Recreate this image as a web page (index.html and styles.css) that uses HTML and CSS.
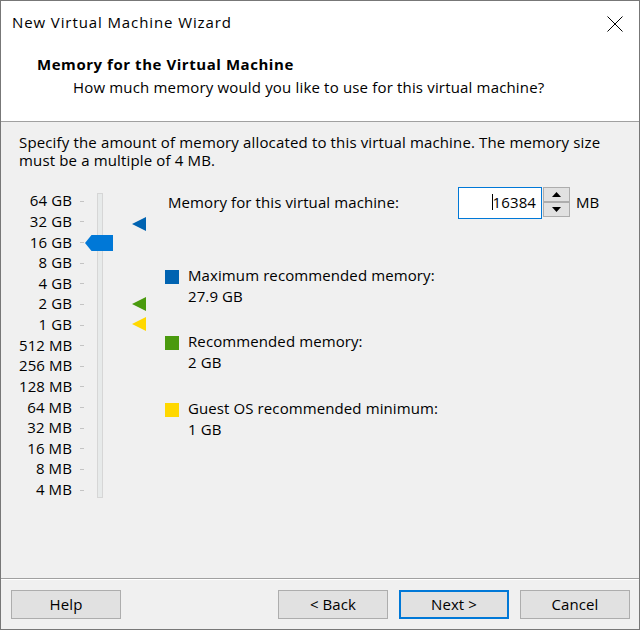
FILE: index.html
```html
<!DOCTYPE html>
<html>
<head>
<meta charset="utf-8">
<title>New Virtual Machine Wizard</title>
<link rel="stylesheet" href="styles.css">
</head>
<body>
<div class="window">
  <div class="titlebar">
    <span class="title">New Virtual Machine Wizard</span>
    <svg class="close" width="16" height="16" viewBox="0 0 16 16"><path d="M0.5 0.5 L15.5 15.5 M15.5 0.5 L0.5 15.5" stroke="#000" stroke-width="1" fill="none"/></svg>
  </div>
  <div class="header">
    <div class="h-title">Memory for the Virtual Machine</div>
    <div class="h-sub">How much memory would you like to use for this virtual machine?</div>
  </div>
  <div class="content">
    <p class="desc">Specify the amount of memory allocated to this virtual machine. The memory size<br>must be a multiple of 4 MB.</p>
    <div class="main">
      <div class="slider">
        <ul class="scale">
          <li><span class="lbl">64 GB</span><span class="tick"></span></li>
          <li><span class="lbl">32 GB</span><span class="tick"></span></li>
          <li><span class="lbl">16 GB</span><span class="tick"></span></li>
          <li><span class="lbl">8 GB</span><span class="tick"></span></li>
          <li><span class="lbl">4 GB</span><span class="tick"></span></li>
          <li><span class="lbl">2 GB</span><span class="tick"></span></li>
          <li><span class="lbl">1 GB</span><span class="tick"></span></li>
          <li><span class="lbl">512 MB</span><span class="tick"></span></li>
          <li><span class="lbl">256 MB</span><span class="tick"></span></li>
          <li><span class="lbl">128 MB</span><span class="tick"></span></li>
          <li><span class="lbl">64 MB</span><span class="tick"></span></li>
          <li><span class="lbl">32 MB</span><span class="tick"></span></li>
          <li><span class="lbl">16 MB</span><span class="tick"></span></li>
          <li><span class="lbl">8 MB</span><span class="tick"></span></li>
          <li><span class="lbl">4 MB</span><span class="tick"></span></li>
        </ul>
        <div class="track"></div>
        <svg class="thumb" style="top:44px" width="28" height="16" viewBox="0 0 28 16"><polygon points="0,8 6.5,0 28,0 28,16 6.5,16" fill="#0078d7"/></svg>
        <svg class="marker" style="top:26px" width="14" height="14" viewBox="0 0 14 14"><polygon points="0,7 14,0 14,14" fill="#0063b1"/></svg>
        <svg class="marker" style="top:106px" width="14" height="14" viewBox="0 0 14 14"><polygon points="0,7 14,0 14,14" fill="#4a9a0e"/></svg>
        <svg class="marker" style="top:126px" width="14" height="14" viewBox="0 0 14 14"><polygon points="0,7 14,0 14,14" fill="#ffd800"/></svg>
      </div>
      <div class="panel">
        <div class="mem-row">
          <span class="mem-label">Memory for this virtual machine:</span>
          <div class="spinbox">
            <div class="input"><span class="caret"></span>16384</div>
            <div class="spin">
              <div class="spin-btn"><svg width="9" height="5" viewBox="0 0 9 5"><polygon points="0,5 4.5,0 9,5" fill="#000"/></svg></div>
              <div class="spin-btn"><svg width="9" height="5" viewBox="0 0 9 5"><polygon points="0,0 9,0 4.5,5" fill="#000"/></svg></div>
            </div>
          </div>
          <span class="unit">MB</span>
        </div>
        <div class="legend">
          <div class="item">
            <span class="swatch sw-blue"></span>
            <div class="item-text">Maximum recommended memory:<br>27.9 GB</div>
          </div>
          <div class="item">
            <span class="swatch sw-green"></span>
            <div class="item-text">Recommended memory:<br>2 GB</div>
          </div>
          <div class="item">
            <span class="swatch sw-yellow"></span>
            <div class="item-text">Guest OS recommended minimum:<br>1 GB</div>
          </div>
        </div>
      </div>
    </div>
  </div>
  <div class="footer">
    <button class="btn btn-help">Help</button>
    <button class="btn">&lt; Back</button>
    <button class="btn btn-default">Next &gt;</button>
    <button class="btn">Cancel</button>
  </div>
</div>
</body>
</html>
```
FILE: styles.css
```css
html, body {
  margin: 0;
  padding: 0;
  background: #ffffff;
}

body {
  font-family: "Open Sans", "Noto Sans", sans-serif;
  font-size: 15px;
  letter-spacing: 0.1px;
  color: #000;
}

.window {
  width: 640px;
  height: 630px;
  box-sizing: border-box;
  border: 1px solid #777777;
  display: flex;
  flex-direction: column;
  background: #f0f0f0;
}

.titlebar {
  height: 45px;
  flex: 0 0 auto;
  background: #fff;
  display: flex;
  align-items: center;
  justify-content: space-between;
  padding: 0 16px 0 11px;
}

.title {
  font-size: 15px;
  letter-spacing: 0.9px;
  line-height: 43px;
  padding-bottom: 2px;
}

.close {
  display: block;
}

.header {
  height: 75px;
  flex: 0 0 auto;
  background: #fff;
  border-bottom: 1px solid #a0a0a0;
  padding-left: 36px;
}

.h-title {
  font-weight: bold;
  letter-spacing: 0.55px;
  line-height: 20px;
  padding-top: 8px;
}

.h-sub {
  line-height: 20px;
  margin-top: 3px;
  padding-left: 36px;
  letter-spacing: 0.17px;
}

.content {
  flex: 1 1 auto;
  padding: 11px 18px 0 18px;
}

.desc {
  margin: 0;
  line-height: 18px;
  letter-spacing: 0.15px;
}

.main {
  display: flex;
  margin-top: 18px;
}

.slider {
  position: relative;
  display: flex;
  width: 128px;
  margin-top: 4px;
  flex: 0 0 auto;
}

.scale {
  list-style: none;
  margin: 0;
  padding: 0;
  width: 65px;
}

.scale li {
  height: 20.64px;
  display: flex;
  align-items: center;
  justify-content: flex-end;
  white-space: nowrap;
}

.lbl {
  padding-bottom: 2px;
}

.tick {
  width: 4px;
  height: 1px;
  background: #c4c4c4;
  margin-left: 8px;
}

.track {
  width: 4px;
  border: 1px solid #d6d6d6;
  background: #e7eaea;
  margin: 2px 0 2.6px 13px;
}

.thumb {
  position: absolute;
  left: 66px;
  display: block;
}

.marker {
  position: absolute;
  left: 113px;
  display: block;
}

.panel {
  margin-left: 18px;
  flex: 1 1 auto;
}

.mem-row {
  display: flex;
  align-items: center;
  height: 32px;
}

.mem-label {
  width: 290px;
  margin-left: 3px;
  padding-bottom: 2px;
}

.spinbox {
  display: flex;
  height: 32px;
}

.input {
  border: 1px solid #0078d7;
  background: #fff;
  display: flex;
  align-items: center;
  justify-content: flex-end;
  padding-right: 5px;
  padding-bottom: 2px;
  box-sizing: border-box;
  width: 84px;
  height: 32px;
}

.caret {
  display: inline-block;
  width: 1px;
  height: 16px;
  background: #000;
}

.spin {
  display: flex;
  flex-direction: column;
  margin-left: 1px;
}

.spin-btn {
  width: 27px;
  height: 15px;
  box-sizing: border-box;
  border: 1px solid #adadad;
  background: #e1e1e1;
  display: flex;
  align-items: center;
  justify-content: center;
}

.spin-btn svg {
  display: block;
}

.unit {
  margin-left: 6px;
  padding-bottom: 2px;
}

.legend {
  margin-top: 45.5px;
  display: flex;
  flex-direction: column;
  gap: 24.5px;
}

.item {
  display: flex;
  line-height: 21px;
}

.swatch {
  width: 14px;
  height: 14px;
  margin-top: 5px;
  margin-right: 9px;
  flex: 0 0 auto;
}

.sw-blue { background: #0063b1; }
.sw-green { background: #4a9a0e; }
.sw-yellow { background: #ffd800; }

.footer {
  flex: 0 0 auto;
  height: 51px;
  box-sizing: border-box;
  border-top: 1px solid #a0a0a0;
  box-shadow: inset 0 1px 0 #ffffff;
  padding: 11px 9px 0 10px;
  display: flex;
  gap: 11px;
}

.btn {
  width: 110px;
  height: 29px;
  box-sizing: border-box;
  border: 1px solid #adadad;
  background: #e1e1e1;
  font-family: inherit;
  font-size: 15px;
  letter-spacing: 0.1px;
  color: #000;
  padding: 0 0 2px 0;
  margin: 0;
}

.btn-help {
  margin-right: auto;
}

.btn-default {
  border: 2px solid #0078d7;
}
```
